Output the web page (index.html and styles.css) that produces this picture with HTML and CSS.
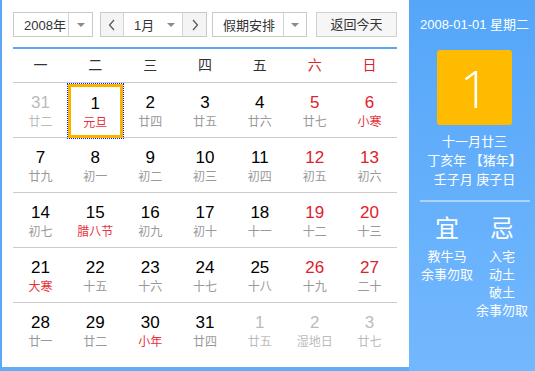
FILE: index.html
```html
<!DOCTYPE html>
<html lang="zh-CN">
<head>
<meta charset="utf-8">
<title>万年历</title>
<link rel="stylesheet" href="styles.css">
</head>
<body>
<div class="cal">
  <div class="main">
    <div class="toolbar">
      <div class="sel year">
        <span class="val">2008年</span>
        <span class="arr"><i class="tri"></i></span>
      </div>
      <div class="sel month">
        <span class="nav nav-prev"><svg width="8" height="12" viewBox="0 0 8 12"><path d="M6 1 L1.5 6 L6 11" fill="none" stroke="#555" stroke-width="1.2"/></svg></span>
        <span class="val">1月</span>
        <span class="arr plain"><i class="tri"></i></span>
        <span class="nav nav-next"><svg width="8" height="12" viewBox="0 0 8 12"><path d="M2 1 L6.5 6 L2 11" fill="none" stroke="#555" stroke-width="1.2"/></svg></span>
      </div>
      <div class="sel holiday">
        <span class="val">假期安排</span>
        <span class="arr"><i class="tri"></i></span>
      </div>
      <button class="today-btn">返回今天</button>
    </div>

    <div class="grid">
      <div class="week">
        <span>一</span><span>二</span><span>三</span><span>四</span><span>五</span><span class="red">六</span><span class="red">日</span>
      </div>

      <div class="row">
        <div class="cell other"><b>31</b><i>廿二</i></div>
        <div class="cell today"><b>1</b><i class="fest">元旦</i></div>
        <div class="cell"><b>2</b><i>廿四</i></div>
        <div class="cell"><b>3</b><i>廿五</i></div>
        <div class="cell"><b>4</b><i>廿六</i></div>
        <div class="cell wk"><b>5</b><i>廿七</i></div>
        <div class="cell wk"><b>6</b><i class="fest">小寒</i></div>
      </div>
      <div class="row">
        <div class="cell"><b>7</b><i>廿九</i></div>
        <div class="cell"><b>8</b><i>初一</i></div>
        <div class="cell"><b>9</b><i>初二</i></div>
        <div class="cell"><b>10</b><i>初三</i></div>
        <div class="cell"><b>11</b><i>初四</i></div>
        <div class="cell wk"><b>12</b><i>初五</i></div>
        <div class="cell wk"><b>13</b><i>初六</i></div>
      </div>
      <div class="row">
        <div class="cell"><b>14</b><i>初七</i></div>
        <div class="cell"><b>15</b><i class="fest">腊八节</i></div>
        <div class="cell"><b>16</b><i>初九</i></div>
        <div class="cell"><b>17</b><i>初十</i></div>
        <div class="cell"><b>18</b><i>十一</i></div>
        <div class="cell wk"><b>19</b><i>十二</i></div>
        <div class="cell wk"><b>20</b><i>十三</i></div>
      </div>
      <div class="row">
        <div class="cell"><b>21</b><i class="fest">大寒</i></div>
        <div class="cell"><b>22</b><i>十五</i></div>
        <div class="cell"><b>23</b><i>十六</i></div>
        <div class="cell"><b>24</b><i>十七</i></div>
        <div class="cell"><b>25</b><i>十八</i></div>
        <div class="cell wk"><b>26</b><i>十九</i></div>
        <div class="cell wk"><b>27</b><i>二十</i></div>
      </div>
      <div class="row last">
        <div class="cell"><b>28</b><i>廿一</i></div>
        <div class="cell"><b>29</b><i>廿二</i></div>
        <div class="cell"><b>30</b><i class="fest">小年</i></div>
        <div class="cell"><b>31</b><i>廿四</i></div>
        <div class="cell other"><b>1</b><i>廿五</i></div>
        <div class="cell other"><b>2</b><i>湿地日</i></div>
        <div class="cell other"><b>3</b><i>廿七</i></div>
      </div>
    </div>
  </div>

  <div class="side">
    <div class="side-date">2008-01-01 星期二</div>
    <div class="big-day">1</div>
    <div class="lunar">
      <div>十一月廿三</div>
      <div>丁亥年 【猪年】</div>
      <div>壬子月 庚子日</div>
    </div>
    <div class="sep"></div>
    <div class="yiji">
      <div class="col yi">
        <div class="head">宜</div>
        <div>教牛马</div>
        <div>余事勿取</div>
      </div>
      <div class="col ji">
        <div class="head">忌</div>
        <div>入宅</div>
        <div>动土</div>
        <div>破土</div>
        <div>余事勿取</div>
      </div>
    </div>
  </div>
</div>
</body>
</html>
```

FILE: styles.css
```css
* { box-sizing: border-box; }

html, body {
  margin: 0;
  padding: 0;
  background: #fff;
}

body {
  font-family: "Liberation Sans", "Noto Sans CJK SC", sans-serif;
  color: #000;
}

.cal {
  display: flex;
  width: 535px;
  height: 371px;
  overflow: hidden;
}

/* ---------- left main area ---------- */
.main {
  width: 409px;
  height: 371px;
  border-left: 2px solid #5aa7f8;
  border-bottom: 4px solid #62adfa;
  padding: 12px 11px 0 11px;
  background: #fff;
}

.toolbar {
  display: flex;
  align-items: stretch;
  height: 25px;
  font-size: 13px;
  color: #333;
}

.sel {
  display: flex;
  align-items: stretch;
  border: 1px solid #c9c9c9;
  background: #fff;
}

.sel .val {
  display: flex;
  align-items: center;
}

.sel .arr {
  display: flex;
  align-items: center;
  justify-content: center;
  border-left: 1px solid #d4d4d4;
}

.sel .arr.plain { border-left: 0; }

.tri {
  display: block;
  width: 0;
  height: 0;
  border-left: 4px solid transparent;
  border-right: 4px solid transparent;
  border-top: 4px solid #8a8a8a;
}

.year { width: 80px; margin-right: 7px; }
.year .val { width: 54px; padding-left: 10px; }
.year .arr { width: 24px; }

.month { width: 107px; margin-right: 5px; }
.month .nav {
  width: 23px;
  display: flex;
  align-items: center;
  justify-content: center;
  background: #f4f4f4;
}
.month .nav-prev { border-right: 1px solid #d4d4d4; }
.month .nav-next { border-left: 1px solid #d4d4d4; width: 24px; }
.month .val { width: 36px; padding-left: 10px; }
.month .arr { width: 22px; }

.holiday { width: 95px; margin-right: 9px; }
.holiday .val { width: 70px; padding-left: 10px; }
.holiday .arr { width: 23px; }

.today-btn {
  width: 81px;
  height: 25px;
  margin: 0;
  padding: 0;
  border: 1px solid #d0d0d0;
  background: #f6f6f6;
  font-family: inherit;
  font-size: 13px;
  color: #333;
  line-height: 23px;
}

/* ---------- grid ---------- */
.grid {
  width: 384px;
  margin-top: 10px;
  border-top: 2px solid #5aa7f8;
}

.week {
  display: grid;
  grid-template-columns: repeat(7, 1fr);
  height: 34px;
  border-bottom: 1px solid #cccccc;
  font-size: 14px;
  line-height: 33px;
  text-align: center;
  color: #333;
}

.week .red { color: #e0212c; }

.row {
  display: grid;
  grid-template-columns: repeat(7, 1fr);
  height: 55px;
  border-bottom: 1px solid #cccccc;
}

.row.last { border-bottom: 0; }

.cell {
  text-align: center;
  padding-top: 10px;
  height: 54px;
}

.cell b {
  display: block;
  font-weight: normal;
  font-size: 17px;
  line-height: 20px;
  color: #000;
}

.cell i {
  display: block;
  font-style: normal;
  font-size: 12px;
  line-height: 18px;
  color: #999;
  white-space: nowrap;
}

.cell.wk b { color: #e0212c; }
.cell i.fest { color: #e8313c; }

.cell.other b { color: #bbbbbb; }
.cell.other i { color: #bbbbbb; }

.cell.today {
  border: 3px solid #f7b500;
  outline: 1px dotted #1a1aee;
  padding-top: 7px;
  margin-top: 1px;
  height: 54px;
}

/* ---------- side panel ---------- */
.side {
  width: 126px;
  height: 371px;
  padding: 16px 0 0 5px;
  background: linear-gradient(#55a6f9, #73b8fe);
  color: #fff;
  text-align: center;
  font-size: 13px;
}

.side-date {
  line-height: 18px;
  white-space: nowrap;
}

.big-day {
  width: 75px;
  height: 75px;
  margin: 16px auto 0;
  background: #ffbb00;
  border-radius: 3px;
  font-family: "Open Sans", "Liberation Sans", sans-serif;
  font-weight: 300;
  font-size: 52px;
  line-height: 75px;
  color: #fff;
}

.lunar {
  margin-top: 7px;
  line-height: 19px;
  white-space: nowrap;
}

.sep {
  width: 110px;
  height: 2px;
  margin: 11px auto 0;
  background: rgba(255, 255, 255, 0.45);
}

.yiji {
  display: flex;
  justify-content: center;
  margin-top: 12px;
}

.yiji .col {
  width: 55px;
  line-height: 18px;
  white-space: nowrap;
  overflow: hidden;
}

.yiji .yi { overflow: hidden; }
.yiji .ji { overflow: visible; }

.yiji .head {
  font-size: 24px;
  line-height: 30px;
  margin-bottom: 4px;
}
```
